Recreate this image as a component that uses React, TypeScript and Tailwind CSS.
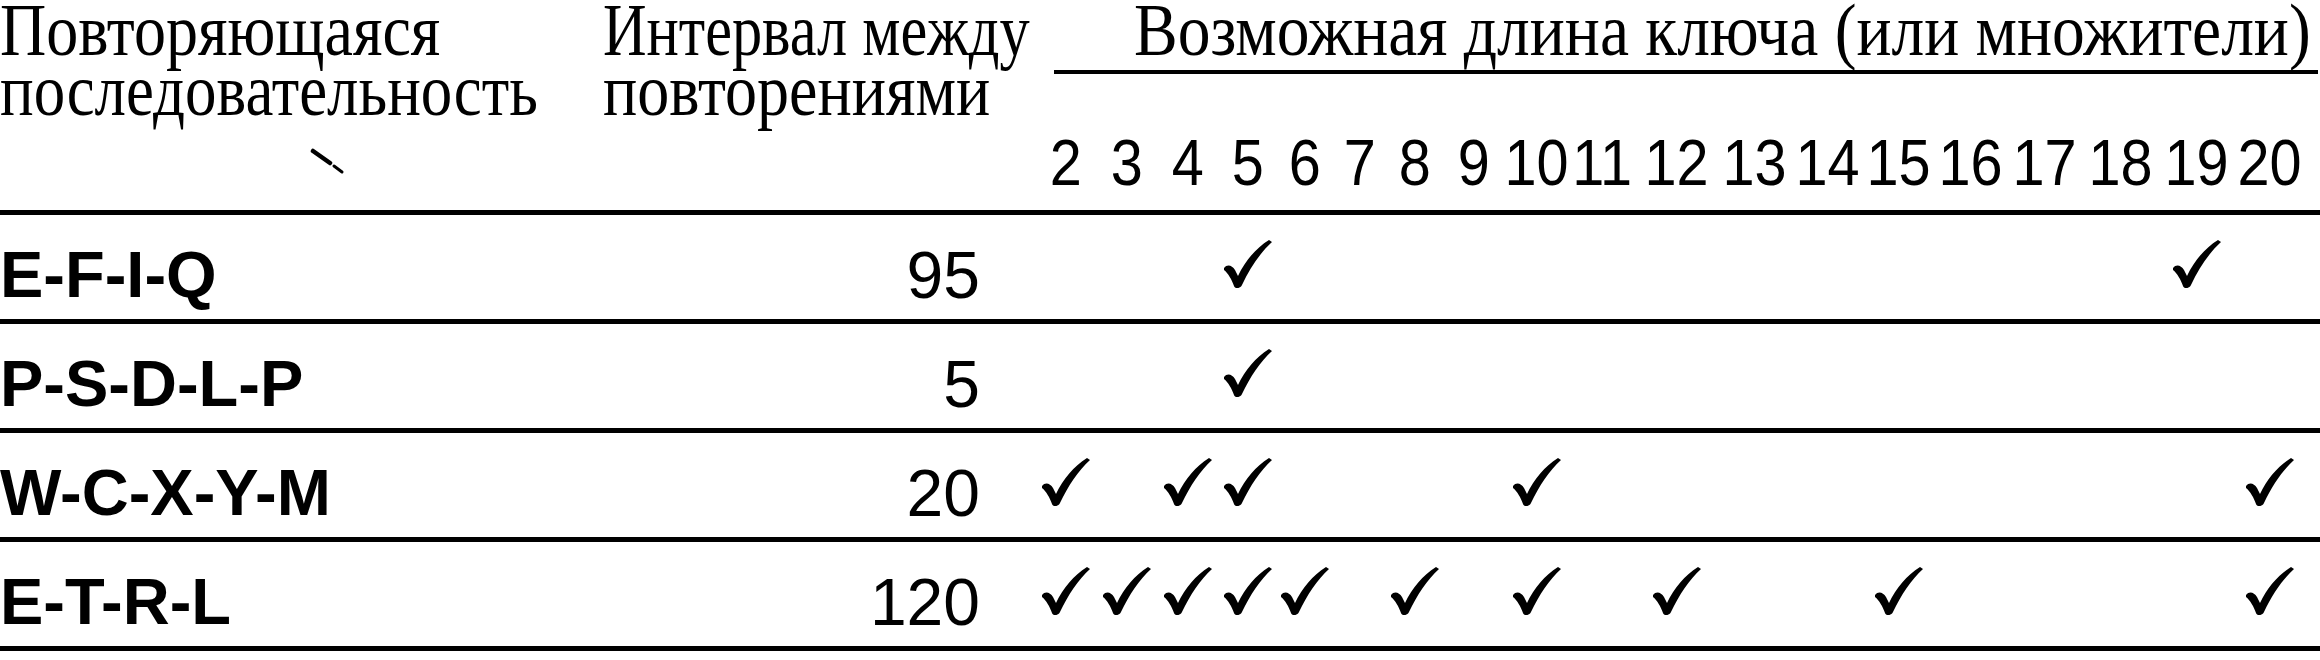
import React from "react";

const nums = [2, 3, 4, 5, 6, 7, 8, 9, 10, 11, 12, 13, 14, 15, 16, 17, 18, 19, 20];

const rows = [
  { label: "E-F-I-Q", val: "95", checks: [5, 19] },
  { label: "P-S-D-L-P", val: "5", checks: [5] },
  { label: "W-C-X-Y-M", val: "20", checks: [2, 4, 5, 10, 20] },
  { label: "E-T-R-L", val: "120", checks: [2, 3, 4, 5, 6, 8, 10, 12, 15, 20] },
];

const gridCols =
  "grid grid-cols-[60px_61px_61px_59px_56px_54px_55px_63px_63px_69px_79px_77px_70px_71px_73px_75px_78px_74px_72px]";

function Check() {
  return (
    <svg width="48" height="48" viewBox="0 0 48 48" className="block">
      <path
        d="M0 28 C3 24 8 25 11 30 L14 36 C21 21 32 8 45 0 L48 2 C36 13 26 28 18 45 C16 49 11 49 10 46 C8 40 4 33 0 30 Z"
        fill="black"
      />
    </svg>
  );
}

export default function App() {
  const serif = { fontFamily: '"Liberation Serif", "Times New Roman", serif' };
  const sans = { fontFamily: '"Liberation Sans", Arial, sans-serif' };
  return (
    <div className="relative w-[2320px] h-[660px] bg-white text-black overflow-hidden">
      {/* header */}
      <div className="flex h-[215px] border-b-[5px] border-black" style={serif}>
        <div className="w-[599px] text-[74px] leading-[60px] whitespace-nowrap">
          <div className="origin-left scale-x-[0.865]">Повторяющаяся</div>
          <div className="origin-left scale-x-[0.85]">последовательность</div>
        </div>
        <div className="w-[437px] pl-[4px] text-[74px] leading-[60px] whitespace-nowrap">
          <div className="origin-left scale-x-[0.815]">Интервал между</div>
          <div className="origin-left scale-x-[0.865]">повторениями</div>
        </div>
        <div className="w-[1284px] flex flex-col">
          <div className="pl-[98px] text-[74px] leading-[60px] whitespace-nowrap">
            <div className="origin-left scale-x-[0.885]">Возможная длина ключа (или множители)</div>
          </div>
          <div className="ml-[18px] mt-[10px] w-[1264px] h-[4px] bg-black" />
          <div className={`${gridCols} mt-[57px] text-[64px] leading-[64px]`} style={sans}>
            {nums.map((n) => (
              <div key={n} className="flex justify-center">
                <span className="inline-block scale-x-90 whitespace-nowrap">{n}</span>
              </div>
            ))}
          </div>
        </div>
      </div>
      {/* body */}
      {rows.map((r) => (
        <div key={r.label} className="flex h-[109px] border-b-[5px] border-black" style={sans}>
          <div className="w-[599px] pt-[27px] text-[65px] leading-[65px] font-bold whitespace-nowrap">
            {r.label}
          </div>
          <div className="w-[381px] pt-[27px] text-[66px] leading-[66px] text-right">{r.val}</div>
          <div className="w-[56px]" />
          <div className={`${gridCols} pt-[25px]`}>
            {nums.map((n) => (
              <div key={n} className="flex justify-center">
                {r.checks.includes(n) ? <Check /> : null}
              </div>
            ))}
          </div>
        </div>
      ))}
      {/* stray scan mark */}
      <svg className="absolute left-[310px] top-[148px]" width="36" height="28" viewBox="0 0 36 28">
        <path d="M3 3 L20 15" stroke="black" strokeWidth="4.5" strokeLinecap="round" fill="none" />
        <path d="M24 18 L32 24" stroke="black" strokeWidth="3" strokeLinecap="round" fill="none" />
      </svg>
    </div>
  );
}
